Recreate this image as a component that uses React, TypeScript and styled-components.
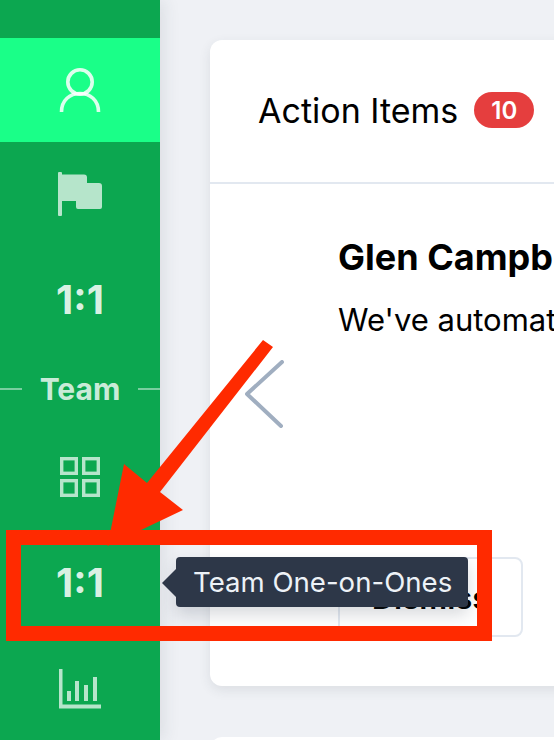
import React from 'react';
import styled, { createGlobalStyle } from 'styled-components';

const GlobalStyle = createGlobalStyle`
  html, body {
    margin: 0;
    padding: 0;
    height: 100%;
    overflow: hidden;
    background: #eff1f5;
    font-family: 'Inter', 'Liberation Sans', sans-serif;
  }
`;

const navIcon = { fill: 'none', stroke: 'currentColor' };

const UserIcon = () => (
  <svg width="44" height="46" viewBox="0 0 44 46" {...navIcon} strokeWidth="3.6">
    <circle cx="22" cy="15" r="12.2" />
    <path d="M3.5 45 C3.5 33 12 26.5 22 26.5 C32 26.5 40.5 33 40.5 45" />
  </svg>
);

const FlagIcon = () => (
  <svg width="44" height="44" viewBox="0 0 44 44" fill="currentColor">
    <rect x="0" y="0" width="4" height="44" rx="1" />
    <path d="M4 2.5 H26 Q29 2.5 29 5.5 V11 H41 Q44 11 44 14 V35 Q44 37 42 37 H20 Q18 37 18 35 V29 H4 Z" />
  </svg>
);

const GridIcon = () => (
  <svg width="40" height="40" viewBox="0 0 40 40" {...navIcon} strokeWidth="3.4">
    <rect x="1.7" y="1.7" width="14.6" height="14.6" />
    <rect x="23.7" y="1.7" width="14.6" height="14.6" />
    <rect x="1.7" y="23.7" width="14.6" height="14.6" />
    <rect x="23.7" y="23.7" width="14.6" height="14.6" />
  </svg>
);

const ChartIcon = () => (
  <svg width="42" height="40" viewBox="0 0 42 40" fill="currentColor">
    <path d="M0 0 H3.5 V35.5 H42 V39.5 H0 Z" />
    <rect x="8" y="22" width="4" height="10" />
    <rect x="16" y="12" width="4" height="20" />
    <rect x="25" y="16" width="4" height="16" />
    <rect x="34" y="8" width="4" height="24" />
  </svg>
);

const App: React.FC = () => {
  return (
    <Page>
      <GlobalStyle />
      <Sidebar>
        <NavItem $height={104} $active>
          <UserIcon />
        </NavItem>
        <NavItem $height={104} $dim>
          <FlagIcon />
        </NavItem>
        <NavItem $height={108}>
          <RatioLabel>1:1</RatioLabel>
        </NavItem>
        <SectionLabel>Team</SectionLabel>
        <NavItem $height={106} $dim>
          <GridIcon />
        </NavItem>
        <NavItem $height={106}>
          <RatioLabel>1:1</RatioLabel>
          <Tooltip>Team One-on-Ones</Tooltip>
        </NavItem>
        <NavItem $height={106} $dim>
          <ChartIcon />
        </NavItem>
      </Sidebar>
      <Main>
        <Card>
          <CardHeader>
            <CardTitle>Action Items</CardTitle>
            <Badge>10</Badge>
          </CardHeader>
          <CardBody>
            <PrevColumn>
              <svg width="40" height="68" viewBox="0 0 40 68" fill="none" stroke="#a0aec0" strokeWidth="4" strokeLinecap="round" strokeLinejoin="round">
                <path d="M37 2 L2 34 L36 66" />
              </svg>
            </PrevColumn>
            <ItemContent>
              <ItemName>Glen Campb</ItemName>
              <ItemText>We've automat</ItemText>
              <ActionRow>
                <DismissButton>Dismiss</DismissButton>
              </ActionRow>
            </ItemContent>
          </CardBody>
        </Card>
        <NextCard />
      </Main>
      <Annotation width="554" height="740" viewBox="0 0 554 740" fill="#ff2a00">
        <polygon points="263,340 273,347 160,492 183,510 107.5,546 124,464 147,483" />
        <rect x="13.5" y="537.5" width="471" height="96" fill="none" stroke="#ff2a00" strokeWidth="15" />
      </Annotation>
    </Page>
  );
};

const Page = styled.div`
  position: relative;
  display: flex;
  width: 554px;
  height: 740px;
  overflow: hidden;
  background: #eff1f5;
`;

const Sidebar = styled.nav`
  flex: 0 0 160px;
  box-sizing: border-box;
  width: 160px;
  height: 740px;
  padding-top: 38px;
  background: #0ca750;
  box-shadow: 4px 0 16px rgba(45, 55, 72, 0.1);
  position: relative;
  z-index: 2;
`;

const NavItem = styled.div<{ $height: number; $active?: boolean; $dim?: boolean }>`
  position: relative;
  display: flex;
  align-items: center;
  justify-content: center;
  height: ${({ $height }) => $height}px;
  background: ${({ $active }) => ($active ? '#1aff88' : 'transparent')};
  color: ${({ $active, $dim }) =>
    $active ? 'rgba(255, 255, 255, 0.85)' : $dim ? 'rgba(255, 255, 255, 0.7)' : 'rgba(255, 255, 255, 0.85)'};
`;

const RatioLabel = styled.span`
  font-size: 40px;
  font-weight: 700;
  line-height: 1;
`;

const SectionLabel = styled.div`
  display: flex;
  align-items: center;
  justify-content: center;
  gap: 18px;
  height: 70px;
  font-size: 30px;
  font-weight: 700;
  color: rgba(255, 255, 255, 0.8);

  &::before,
  &::after {
    content: '';
    flex: 1;
    height: 2px;
    background: rgba(255, 255, 255, 0.45);
  }
`;

const Tooltip = styled.div`
  position: absolute;
  left: 176px;
  top: 27px;
  display: flex;
  align-items: center;
  height: 50px;
  padding: 0 16px 0 17px;
  border-radius: 4px;
  background: #2d3748;
  box-shadow: 0 8px 16px rgba(45, 55, 72, 0.18);
  color: #edf2f7;
  font-size: 27.6px;
  font-weight: 400;
  white-space: nowrap;

  &::before {
    content: '';
    position: absolute;
    left: -14px;
    top: 12px;
    width: 0;
    height: 0;
    border-top: 14px solid transparent;
    border-bottom: 14px solid transparent;
    border-right: 14px solid #2d3748;
  }
`;

const Main = styled.main`
  flex: 1;
  min-width: 0;
  padding: 40px 0 0 50px;
`;

const Card = styled.section`
  box-sizing: border-box;
  width: 700px;
  height: 646px;
  border-radius: 12px;
  background: #ffffff;
  box-shadow: 0 4px 12px rgba(45, 55, 72, 0.1);
`;

const CardHeader = styled.header`
  box-sizing: border-box;
  display: flex;
  align-items: center;
  gap: 16px;
  height: 144px;
  padding: 0 0 2px 48px;
  border-bottom: 2px solid #e2e8f0;
`;

const CardTitle = styled.h2`
  margin: 0;
  font-size: 34px;
  font-weight: 400;
  color: #000000;
`;

const Badge = styled.span`
  display: flex;
  align-items: center;
  justify-content: center;
  width: 60px;
  height: 36px;
  border-radius: 18px;
  background: #e53e3e;
  color: #ffffff;
  font-size: 24px;
  font-weight: 600;
`;

const CardBody = styled.div`
  display: flex;
`;

const PrevColumn = styled.div`
  flex: 0 0 128px;
  box-sizing: border-box;
  padding: 176px 0 0 35px;
`;

const ItemContent = styled.div`
  padding-top: 50px;
`;

const ItemName = styled.h3`
  margin: 0;
  font-size: 36px;
  line-height: 46px;
  font-weight: 700;
  color: #000000;
  white-space: nowrap;
`;

const ItemText = styled.p`
  margin: 22px 0 0;
  font-size: 31px;
  line-height: 36px;
  color: #000000;
  white-space: nowrap;
`;

const ActionRow = styled.div`
  margin-top: 219px;
`;

const DismissButton = styled.button`
  box-sizing: border-box;
  width: 185px;
  height: 80px;
  padding: 0;
  border: 2px solid #e2e8f0;
  border-radius: 8px;
  background: #ffffff;
  color: #000000;
  font-family: inherit;
  font-size: 31px;
  font-weight: 600;
`;

const NextCard = styled.section`
  width: 700px;
  height: 100px;
  margin-top: 51px;
  border-radius: 12px;
  background: #ffffff;
`;

const Annotation = styled.svg`
  position: absolute;
  left: 0;
  top: 0;
  z-index: 5;
  pointer-events: none;
`;

export default App;
